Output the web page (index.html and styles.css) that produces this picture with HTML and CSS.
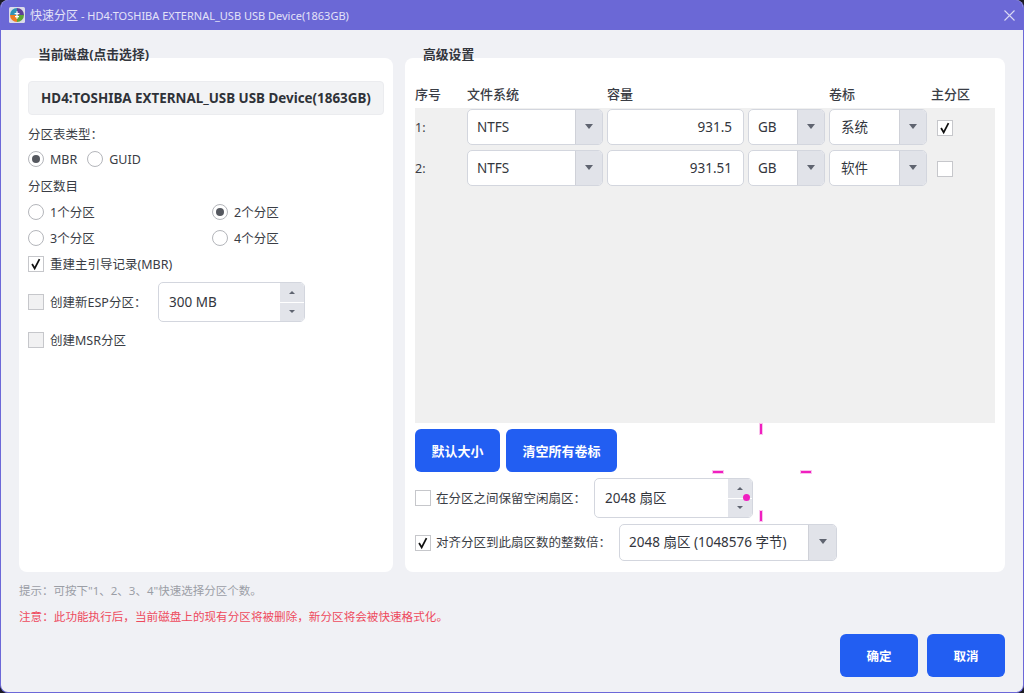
FILE: index.html
```html
<!DOCTYPE html>
<html lang="zh-CN">
<head>
<meta charset="utf-8">
<title>快速分区</title>
<link rel="stylesheet" href="styles.css">
</head>
<body>
<div class="window">
  <header class="titlebar">
    <svg class="app-icon" viewBox="0 0 16 16" width="16" height="16">
      <rect width="16" height="16" rx="1.5" fill="#dcdcea"/>
      <path d="M8 8V1A7 7 0 0 0 1 8z" fill="#2f93b5"/>
      <path d="M8 8V1A7 7 0 0 1 15 8z" fill="#5d3f96"/>
      <path d="M8 8H15A7 7 0 0 1 8 15z" fill="#5da536"/>
      <path d="M8 8H1A7 7 0 0 0 8 15z" fill="#ee7d23"/>
      <path d="M8 4.2v7.6M5.6 6.6h4.8M6 9.6h4" stroke="#fff" stroke-width="1.3" fill="none"/>
    </svg>
    <span class="title-text"><span class="title-cjk">快速分区</span> - HD4:TOSHIBA EXTERNAL_USB USB Device(1863GB)</span>
    <svg class="close" viewBox="0 0 11 11" width="11" height="11"><path d="M.5.5l10 10M10.500.5l-10 10" stroke="#d9d8f4" stroke-width="1.1" fill="none"/></svg>
  </header>

  <main class="panels">
    <section class="panel panel-left">
      <h2 class="legend">当前磁盘(点击选择)</h2>
      <div class="disk">HD4:TOSHIBA EXTERNAL_USB USB Device(1863GB)</div>
      <div class="row row-first">分区表类型：</div>
      <div class="row row-radio-a">
        <label class="opt"><i class="radio on"></i>MBR</label>
        <label class="opt"><i class="radio"></i>GUID</label>
      </div>
      <div class="row row-count">分区数目</div>
      <div class="radio-grid">
        <label class="opt"><i class="radio"></i>1个分区</label>
        <label class="opt"><i class="radio on"></i>2个分区</label>
        <label class="opt"><i class="radio"></i>3个分区</label>
        <label class="opt"><i class="radio"></i>4个分区</label>
      </div>
      <label class="opt row row-mbr"><i class="check"><svg viewBox="0 0 16 16"><path d="M3.500 8l3 5L12 2.500" class="tick"/></svg></i>重建主引导记录(MBR)</label>
      <div class="row row-esp">
        <label class="opt"><i class="check off"></i>创建新ESP分区：</label>
        <div class="spin spin-esp">
          <span class="spin-val">300 MB</span>
          <span class="spin-btns"><b><i class="up"></i></b><b><i class="down"></i></b></span>
        </div>
      </div>
      <label class="opt row row-msr"><i class="check off"></i>创建MSR分区</label>
    </section>

    <section class="panel panel-right">
      <h2 class="legend">高级设置</h2>
      <div class="grid head">
        <span>序号</span><span>文件系统</span><span>容量</span><span></span><span>卷标</span><span>主分区</span>
      </div>
      <div class="table">
        <div class="grid">
          <span class="idx">1:</span>
          <div class="combo"><span class="val">NTFS</span><span class="arrow"><i class="down"></i></span></div>
          <div class="num">931.5</div>
          <div class="combo"><span class="val">GB</span><span class="arrow"><i class="down"></i></span></div>
          <div class="combo combo-label"><span class="val">系统</span><span class="arrow"><i class="down"></i></span></div>
          <i class="check white"><svg viewBox="0 0 16 16"><path d="M3.500 8l3 5L12 2.500" class="tick"/></svg></i>
        </div>
        <div class="grid">
          <span class="idx">2:</span>
          <div class="combo"><span class="val">NTFS</span><span class="arrow"><i class="down"></i></span></div>
          <div class="num">931.51</div>
          <div class="combo"><span class="val">GB</span><span class="arrow"><i class="down"></i></span></div>
          <div class="combo combo-label"><span class="val">软件</span><span class="arrow"><i class="down"></i></span></div>
          <i class="check white"></i>
        </div>
      </div>
      <div class="actions">
        <button class="btn btn-default">默认大小</button>
        <button class="btn btn-clear">清空所有卷标</button>
      </div>
      <div class="row-free">
        <label class="opt"><i class="check"></i>在分区之间保留空闲扇区：</label>
        <div class="spin spin-free">
          <span class="spin-val">2048 扇区</span>
          <span class="spin-btns"><b><i class="up"></i></b><b><i class="down"></i></b></span>
        </div>
      </div>
      <div class="row-align">
        <label class="opt"><i class="check"><svg viewBox="0 0 16 16"><path d="M3.500 8l3 5L12 2.500" class="tick"/></svg></i>对齐分区到此扇区数的整数倍：</label>
        <div class="combo combo-align"><span class="val">2048 扇区 (1048576 字节)</span><span class="arrow"><i class="down"></i></span></div>
      </div>
      <i class="mark v m1"></i><i class="mark h m2"></i><i class="mark h m3"></i><i class="mark v m4"></i><i class="dot"></i>
    </section>
  </main>

  <footer class="footer">
    <p class="hint">提示：可按下"1、2、3、4"快速选择分区个数。</p>
    <p class="warn">注意：此功能执行后，当前磁盘上的现有分区将被删除，新分区将会被快速格式化。</p>
    <div class="footer-btns">
      <button class="btn btn-foot">确定</button>
      <button class="btn btn-foot">取消</button>
    </div>
  </footer>
</div>
</body>
</html>
```
FILE: styles.css
```css
* { box-sizing: border-box; }
html, body { margin: 0; padding: 0; background: #1b1b24; }
body {
  width: 1024px; height: 693px; overflow: hidden;
  font-family: "Noto Sans", "Noto Sans CJK SC", sans-serif;
  font-size: 12.5px; line-height: 21px; color: #3a3d45;
}
.window {
  width: 1024px; height: 693px;
  display: flex; flex-direction: column;
  background: #f0f1f5;
  border: 1px solid #6c68d8; border-top: 0;
  border-radius: 8px; overflow: hidden;
}
.titlebar {
  height: 30px; flex: none;
  display: flex; align-items: center;
  background: #6b68d6; color: #e4e3f8;
  padding: 0 8px 0 8px; font-size: 11px;
}
.title-text { margin-left: 5px; flex: 1; }
.title-cjk { font-size: 12px; }
.app-icon { flex: none; }
.panels {
  flex: none; height: 514px; margin-top: 28px;
  padding: 0 18px; display: flex; gap: 12px;
}
.panel {
  position: relative; background: #fff; border-radius: 8px;
  display: flex; flex-direction: column;
}
.panel-left { width: 374px; padding: 23px 9px 0; }
.panel-right { width: 600px; padding: 29px 10px 0; }
.legend {
  position: absolute; top: -13px; left: 14px; margin: 0;
  padding: 0 5px; font-size: 12.8px; font-weight: 700; line-height: 18px; color: #33363d;
  background: linear-gradient(#f0f1f5 0 13px, #fff 13px);
}
.panel-right .legend { left: 13px; }
.disk {
  height: 34px; display: flex; align-items: center; justify-content: center;
  background: #f2f3f5; border: 1px solid #ebecef; border-radius: 4px;
  font-size: 13.4px; font-weight: 700; color: #2f3238;
}
.row { height: 22px; display: flex; align-items: center; }
.row-first { margin-top: 8px; }
.row-radio-a { margin-top: 3px; gap: 10px; }
.row-count { margin-top: 5px; }
.radio-grid {
  margin-top: 4px; display: grid;
  grid-template-columns: 184px 1fr; grid-auto-rows: 22px; row-gap: 4px;
}
.row-mbr { margin-top: 4px; }
.row-esp { margin-top: 7px; height: 40px; gap: 0; }
.row-esp .opt { width: 130px; }
.row-msr { margin-top: 7px; }
.opt { display: flex; align-items: center; gap: 6px; white-space: nowrap; }
.radio {
  width: 16px; height: 16px; flex: none; border-radius: 50%;
  border: 1px solid #b4b6bb; background: #fff; position: relative;
}
.radio.on::after {
  content: ""; position: absolute; inset: 3px; border-radius: 50%; background: #55585f;
}
.check {
  width: 16px; height: 16px; flex: none; display: block;
  border: 1px solid #c6c7cb; background: #fff;
}
.check.off { background: #f1f1f2; }
.check svg { display: block; width: 14px; height: 14px; }
.tick { fill: none; stroke: #111; stroke-width: 2; }
.spin {
  display: flex; background: #fff; border: 1px solid #d3d6de; border-radius: 5px; overflow: hidden;
}
.spin-esp { width: 147px; height: 40px; }
.spin-free { width: 159px; height: 40px; }
.spin-val { flex: 1; display: flex; align-items: center; padding-left: 10px; font-size: 13.5px; color: #33363d; }
.spin-btns { width: 24px; display: flex; flex-direction: column; gap: 1px; background: #fff; }
.spin-btns b { flex: 1; background: #e2e4ea; display: flex; align-items: center; justify-content: center; }
.up, .down { display: block; width: 0; height: 0; border-left: 3.5px solid transparent; border-right: 3.5px solid transparent; }
.up { border-bottom: 3px solid #5f6470; }
.down { border-top: 3px solid #5f6470; }
.grid {
  display: grid; grid-template-columns: 48px 136px 137px 77px 98px 64px;
  column-gap: 4px; align-items: center;
}
.grid > .check { margin-left: 6px; margin-top: 1px; }
.head { height: 14px; line-height: 14px; margin-bottom: 7px; font-weight: 500; color: #3a3d45; font-size: 13px; }
.table {
  height: 315px; flex: none; background: #f0f0f0; padding-top: 1px;
  display: flex; flex-direction: column; gap: 5px;
}
.idx { font-size: 12.5px; }
.combo {
  height: 36px; display: flex; background: #fff;
  border: 1px solid #d3d6de; border-radius: 5px; overflow: hidden;
}
.val { flex: 1; display: flex; align-items: center; padding-left: 9px; font-size: 13.5px; color: #33363d; white-space: nowrap; }
.combo-label .val { padding-left: 11px; }
.arrow {
  width: 27px; flex: none; background: #e1e3e9; border-left: 1px solid #cfd1d8;
  display: flex; align-items: center; justify-content: center; padding-bottom: 2px;
}
.arrow .down { border-left-width: 4.500px; border-right-width: 4.500px; border-top-width: 5px; }
.num {
  height: 36px; background: #fff; border: 1px solid #d3d6de; border-radius: 5px;
  display: flex; align-items: center; justify-content: flex-end;
  padding-right: 11px; font-size: 13.5px; color: #33363d;
}
.actions { margin-top: 6px; display: flex; gap: 6px; }
.btn {
  height: 43px; border: 0; border-radius: 6px; background: #225ef2; color: #fff;
  font: 700 13px "Noto Sans", "Noto Sans CJK SC", sans-serif; padding: 0;
}
.btn-default { width: 85px; }
.btn-clear { width: 111px; }
.row-free { margin-top: 6px; height: 40px; display: flex; align-items: center; }
.row-free .opt { width: 179px; gap: 5px; }
.row-align { margin-top: 6px; height: 37px; display: flex; align-items: center; }
.row-align .opt { width: 204px; gap: 5px; }
.combo-align { width: 218px; height: 37px; }
.combo-align .arrow { width: 28px; }
.mark { position: absolute; background: #f01fc0; box-shadow: 0 0 0 1px #f9c4ec; }
.mark.v { width: 2px; height: 10px; }
.mark.h { width: 10px; height: 2px; }
.m1 { left: 355px; top: 366px; }
.m2 { left: 308px; top: 413px; }
.m3 { left: 396px; top: 413px; }
.m4 { left: 355px; top: 453px; }
.dot { position: absolute; left: 338px; top: 436px; width: 7px; height: 7px; border-radius: 50%; background: #f01fc0; }
.footer { flex: 1; position: relative; padding: 11px 0 0 18px; }
.hint, .warn { margin: 0; line-height: 16px; }
.hint { color: #9b9ea6; font-size: 11.5px; }
.warn { color: #ee4a5d; margin-top: 10px; font-size: 11.6px; }
.footer-btns {
  display: flex; justify-content: flex-end; gap: 9px;
  margin-top: 9px; padding-right: 18px;
}
.btn-foot { width: 78px; height: 43px; font-size: 12.5px; }
```
